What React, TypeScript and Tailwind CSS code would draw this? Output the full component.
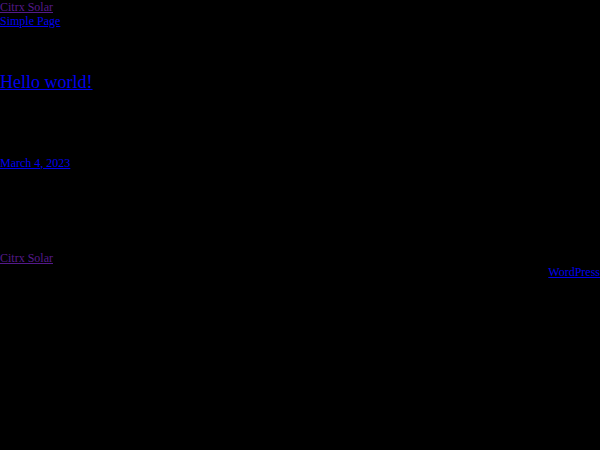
export default function App() {
  const link = 'underline text-[#0000ee]';
  const visited = 'underline text-[#551a8b]';
  return (
    <div className="min-h-[450px] bg-black font-['Liberation_Serif',serif] text-[12px] leading-[14px]">
      <header className="flex flex-col">
        <a href="#" className={`${visited} w-fit`}>Citrx Solar</a>
        <a href="#" className={`${link} w-fit`}>Simple Page</a>
      </header>
      <main className="flex flex-col">
        <h2 className="mt-[44px] text-[18px] leading-[20px]">
          <a href="#" className={link}>Hello world!</a>
        </h2>
        <div className="mt-[64px]">
          <a href="#" className={link}>March 4, 2023</a>
        </div>
      </main>
      <footer className="mt-[81px] flex flex-col">
        <a href="#" className={`${visited} w-fit`}>Citrx Solar</a>
        <a href="#" className={`${link} self-end`}>WordPress</a>
      </footer>
    </div>
  );
}
